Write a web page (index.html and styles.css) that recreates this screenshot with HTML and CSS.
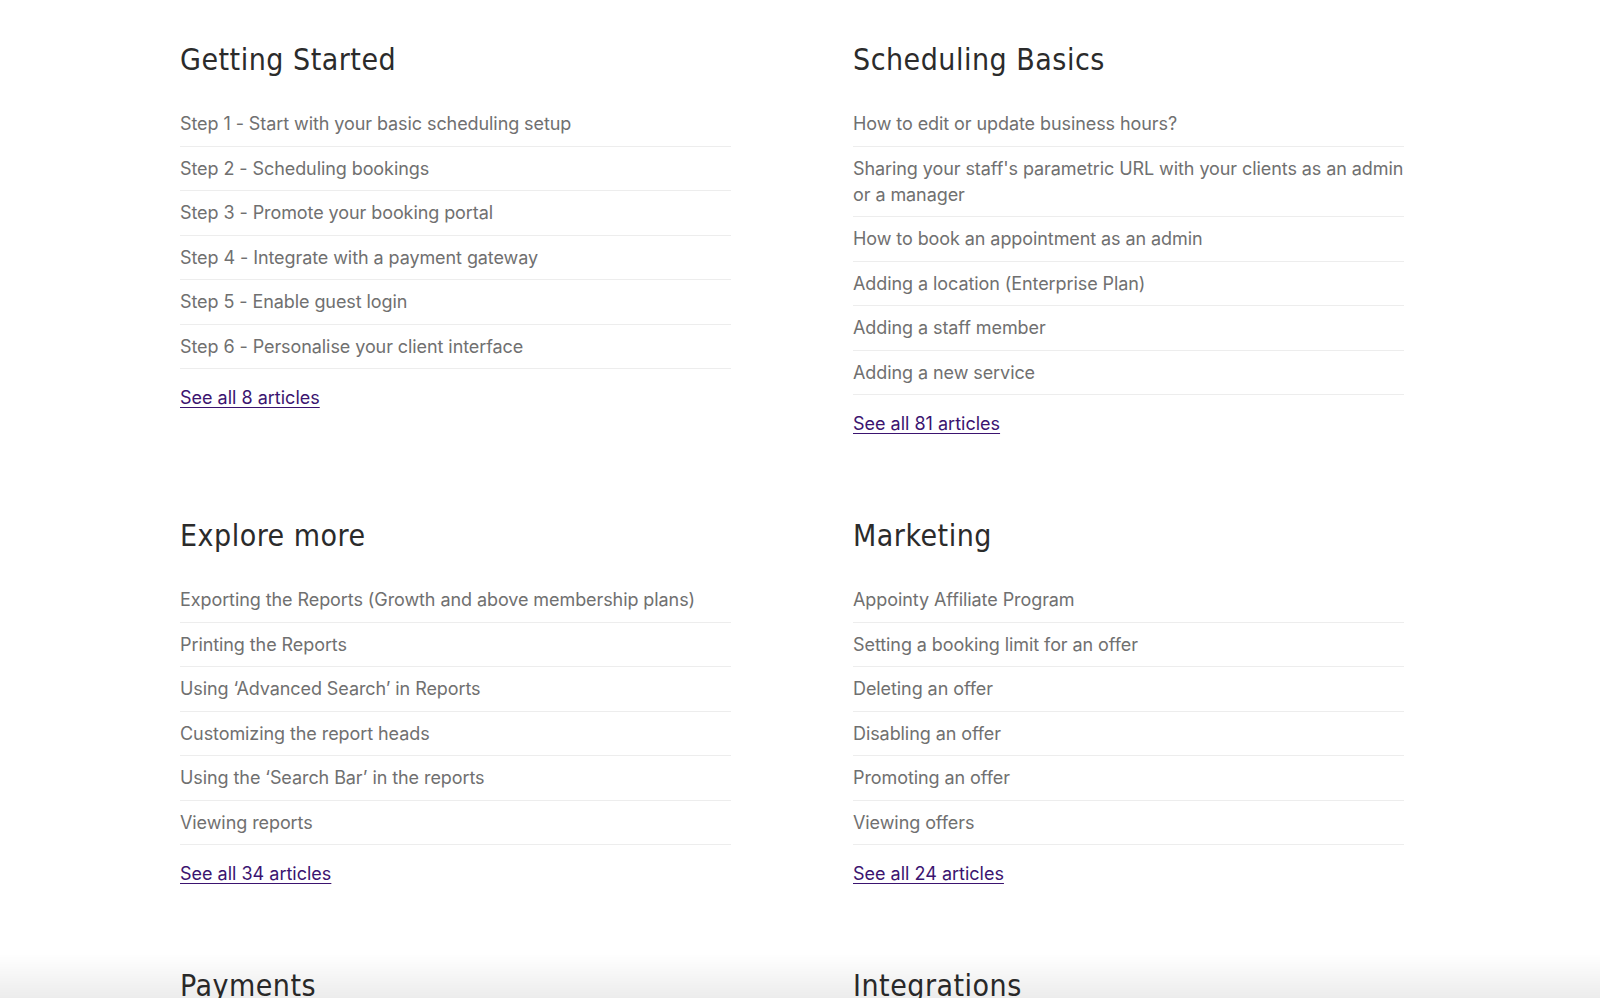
FILE: index.html
```html
<!DOCTYPE html>
<html>

<head>
  <meta name="viewport" content="width=device-width,initial-scale=1">
  <link rel="stylesheet" href="styles.css">
</head>

<body>
  <main class="collections">

    <!-- Row 1 -->
    <section class="collection">
      <h2 class="collection-title">Getting Started</h2>
      <ul class="articles">
        <li><a href="#">Step 1 - Start with your basic scheduling setup</a></li>
        <li><a href="#">Step 2 - Scheduling bookings</a></li>
        <li><a href="#">Step 3 - Promote your booking portal</a></li>
        <li><a href="#">Step 4 - Integrate with a payment gateway</a></li>
        <li><a href="#">Step 5 - Enable guest login</a></li>
        <li><a href="#">Step 6 - Personalise your client interface</a></li>
      </ul>
      <a class="see-all" href="#">See all 8 articles</a>
    </section>

    <section class="collection">
      <h2 class="collection-title">Scheduling Basics</h2>
      <ul class="articles">
        <li><a href="#">How to edit or update business hours?</a></li>
        <li><a href="#">Sharing your staff's parametric URL with your clients as an admin or a manager</a></li>
        <li><a href="#">How to book an appointment as an admin</a></li>
        <li><a href="#">Adding a location (Enterprise Plan)</a></li>
        <li><a href="#">Adding a staff member</a></li>
        <li><a href="#">Adding a new service</a></li>
      </ul>
      <a class="see-all" href="#">See all 81 articles</a>
    </section>

    <!-- Row 2 -->
    <section class="collection">
      <h2 class="collection-title">Explore more</h2>
      <ul class="articles">
        <li><a href="#">Exporting the Reports (Growth and above membership plans)</a></li>
        <li><a href="#">Printing the Reports</a></li>
        <li><a href="#">Using ‘Advanced Search’ in Reports</a></li>
        <li><a href="#">Customizing the report heads</a></li>
        <li><a href="#">Using the ‘Search Bar’ in the reports</a></li>
        <li><a href="#">Viewing reports</a></li>
      </ul>
      <a class="see-all" href="#">See all 34 articles</a>
    </section>

    <section class="collection">
      <h2 class="collection-title">Marketing</h2>
      <ul class="articles">
        <li><a href="#">Appointy Affiliate Program</a></li>
        <li><a href="#">Setting a booking limit for an offer</a></li>
        <li><a href="#">Deleting an offer</a></li>
        <li><a href="#">Disabling an offer</a></li>
        <li><a href="#">Promoting an offer</a></li>
        <li><a href="#">Viewing offers</a></li>
      </ul>
      <a class="see-all" href="#">See all 24 articles</a>
    </section>

    <!-- Row 3 -->
    <section class="collection">
      <h2 class="collection-title">Payments</h2>
    </section>

    <section class="collection">
      <h2 class="collection-title">Integrations</h2>
    </section>

  </main>

  <div class="bottom-fade"></div>
</body>

</html>
```

FILE: styles.css
```css
/* Page */

body {
  margin: 0;
  background-color: #fff;
  font-family: "Inter", "Liberation Sans", sans-serif;
  overflow: hidden;
}

/* Two column grid of collections */

.collections {
  display: grid;
  grid-template-columns: 551px 551px;
  column-gap: 122px;
  row-gap: 79px;
  margin-left: 180px;
  padding-top: 40px;
}

/* Collection title */

.collection-title {
  margin: 0;
  font-family: "DejaVu Sans Condensed", "DejaVu Sans", sans-serif;
  font-stretch: condensed;
  font-weight: normal;
  font-size: 30px;
  line-height: 40px;
  letter-spacing: 0.5px;
  color: #2b2b2b;
}

/* Article list */

.articles {
  list-style: none;
  margin: 22px 0 0;
  padding: 0;
}

.articles li {
  padding: 9px 0 8.5px;
  border-bottom: 1px solid #ededed;
  font-size: 18px;
  line-height: 26px;
  letter-spacing: -0.08px;
}

.articles a {
  color: #707070;
  text-decoration: none;
}

/* See all link */

.see-all {
  display: inline-block;
  margin-top: 16px;
  font-size: 18px;
  line-height: 26px;
  color: #3b1470;
  text-decoration: underline;
  text-underline-offset: 3px;
}

/* Shade along the bottom edge of the window */

.bottom-fade {
  position: fixed;
  left: 0;
  right: 0;
  bottom: 0;
  height: 44px;
  background: linear-gradient(to bottom, rgba(0, 0, 0, 0), rgba(0, 0, 0, 0.075));
  pointer-events: none;
}
```
